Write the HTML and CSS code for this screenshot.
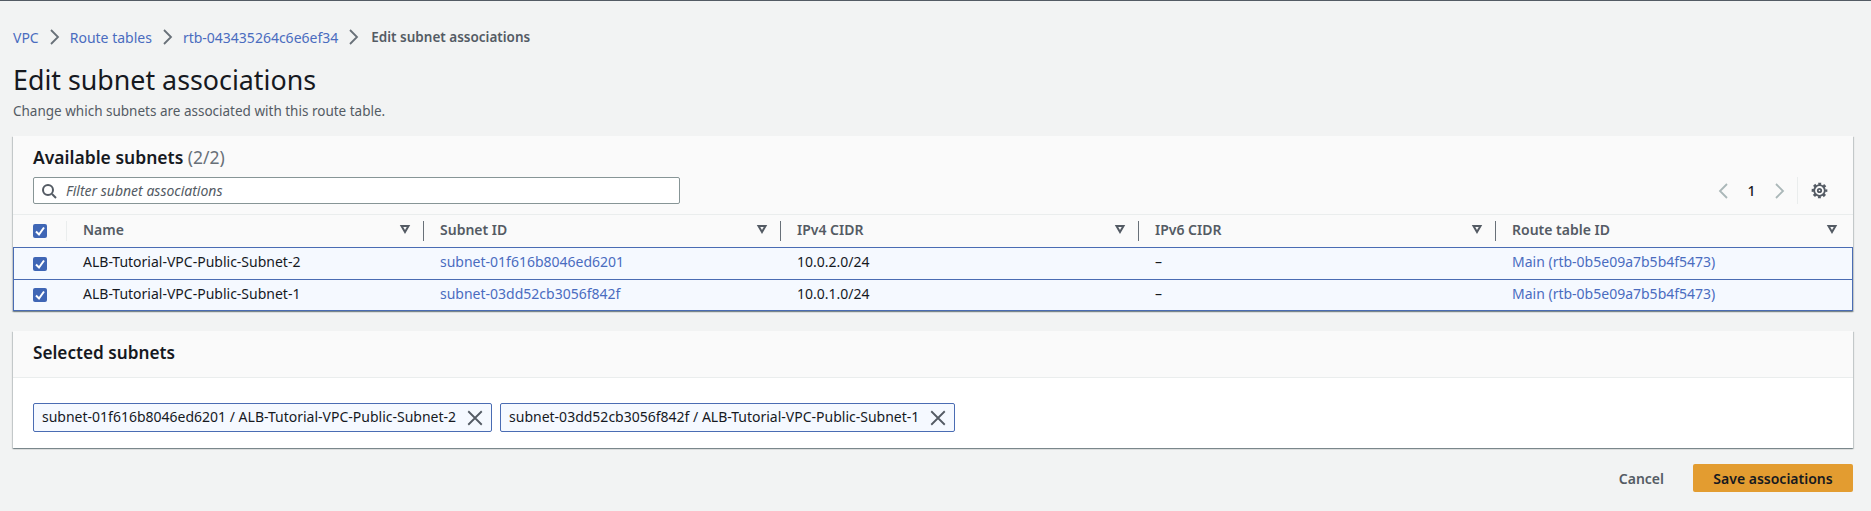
FILE: index.html
```html
<!DOCTYPE html>
<html lang="en">
<head>
    <meta charset="UTF-8">
    <title>Edit subnet associations</title>
    <link rel="stylesheet" href="styles.css">
</head>
<body>
    <nav class="breadcrumbs">
        <a href="#">VPC</a>
        <svg class="crumb-arrow" viewBox="0 0 16 16"><path d="M4 1l7 7-7 7"/></svg>
        <a href="#">Route tables</a>
        <svg class="crumb-arrow" viewBox="0 0 16 16"><path d="M4 1l7 7-7 7"/></svg>
        <a href="#">rtb-043435264c6e6ef34</a>
        <svg class="crumb-arrow crumb-arrow-last" viewBox="0 0 16 16"><path d="M4 1l7 7-7 7"/></svg>
        <span class="crumb-current">Edit subnet associations</span>
    </nav>

    <h1 class="page-title">Edit subnet associations</h1>
    <p class="page-desc">Change which subnets are associated with this route table.</p>

    <section class="card">
        <div class="card-head">
            <h2 class="card-title">Available subnets <span class="count">(2/2)</span></h2>
            <div class="tools">
                <div class="filter">
                    <svg class="search-icon" viewBox="0 0 16 16"><circle cx="7" cy="7" r="5"/><path d="M11 11l4 4"/></svg>
                    <span>Filter subnet associations</span>
                </div>
                <div class="pager">
                    <svg class="page-arrow" viewBox="0 0 16 16"><path d="M12 1L5 8l7 7"/></svg>
                    <span class="page-num">1</span>
                    <svg class="page-arrow" viewBox="0 0 16 16"><path d="M4 1l7 7-7 7"/></svg>
                    <span class="pager-gear">
                        <svg class="gear" viewBox="0 0 16 16">
                            <circle cx="8" cy="8" r="5"/>
                            <circle cx="8" cy="8" r="1.6"/>
                            <circle class="gear-teeth" cx="8" cy="8" r="6.2"/>
                        </svg>
                    </span>
                </div>
            </div>
        </div>

        <div class="table-row table-header">
            <div class="cell cell-check"><span class="checkbox"><svg viewBox="0 0 14 14"><path d="M3 7.5l3 3 5-7"/></svg></span></div>
            <div class="cell"><span>Name</span><svg class="sort" viewBox="0 0 12 12"><path d="M2.5 3h7L6 9z"/></svg></div>
            <div class="cell"><span>Subnet ID</span><svg class="sort" viewBox="0 0 12 12"><path d="M2.5 3h7L6 9z"/></svg></div>
            <div class="cell"><span>IPv4 CIDR</span><svg class="sort" viewBox="0 0 12 12"><path d="M2.5 3h7L6 9z"/></svg></div>
            <div class="cell"><span>IPv6 CIDR</span><svg class="sort" viewBox="0 0 12 12"><path d="M2.5 3h7L6 9z"/></svg></div>
            <div class="cell cell-last"><span>Route table ID</span><svg class="sort" viewBox="0 0 12 12"><path d="M2.5 3h7L6 9z"/></svg></div>
        </div>

        <div class="table-row data-row">
            <div class="cell cell-check"><span class="checkbox"><svg viewBox="0 0 14 14"><path d="M3 7.5l3 3 5-7"/></svg></span></div>
            <div class="cell">ALB-Tutorial-VPC-Public-Subnet-2</div>
            <div class="cell"><a href="#">subnet-01f616b8046ed6201</a></div>
            <div class="cell">10.0.2.0/24</div>
            <div class="cell">–</div>
            <div class="cell"><a href="#">Main (rtb-0b5e09a7b5b4f5473)</a></div>
        </div>
        <div class="table-row data-row">
            <div class="cell cell-check"><span class="checkbox"><svg viewBox="0 0 14 14"><path d="M3 7.5l3 3 5-7"/></svg></span></div>
            <div class="cell">ALB-Tutorial-VPC-Public-Subnet-1</div>
            <div class="cell"><a href="#">subnet-03dd52cb3056f842f</a></div>
            <div class="cell">10.0.1.0/24</div>
            <div class="cell">–</div>
            <div class="cell"><a href="#">Main (rtb-0b5e09a7b5b4f5473)</a></div>
        </div>
    </section>

    <section class="card selected-card">
        <div class="selected-head">
            <h2 class="card-title">Selected subnets</h2>
        </div>
        <div class="chips">
            <div class="chip">
                <span>subnet-01f616b8046ed6201 / ALB-Tutorial-VPC-Public-Subnet-2</span>
                <svg class="chip-x" viewBox="0 0 16 16"><path d="M2 2l12 12M14 2L2 14"/></svg>
            </div>
            <div class="chip">
                <span>subnet-03dd52cb3056f842f / ALB-Tutorial-VPC-Public-Subnet-1</span>
                <svg class="chip-x" viewBox="0 0 16 16"><path d="M2 2l12 12M14 2L2 14"/></svg>
            </div>
        </div>
    </section>

    <div class="actions">
        <a class="cancel" href="#">Cancel</a>
        <button class="save">Save associations</button>
    </div>
</body>
</html>
```

FILE: styles.css
```css
body {
    margin: 0;
    padding: 0 18px 0 13px;
    height: 511px;
    box-sizing: border-box;
    overflow: hidden;
    background-color: #f2f3f3;
    border-top: 1px solid #545b64;
    font-family: "Noto Sans", sans-serif;
    font-size: 14px;
    color: #16191f;
}
a {
    color: #4a6cbf;
    text-decoration: none;
}
.breadcrumbs {
    display: flex;
    align-items: center;
    height: 20px;
    margin-top: 26px;
}
.crumb-arrow {
    width: 16px;
    height: 16px;
    margin: 0 7px 0 8px;
    fill: none;
    stroke: #687078;
    stroke-width: 1.8;
}
.crumb-arrow-last {
    margin-right: 9px;
}
.crumb-current {
    color: #545b64;
    font-size: 13.5px;
    font-weight: 600;
}
.page-title {
    margin: 15px 0 0;
    font-size: 26.8px;
    line-height: 36px;
    font-weight: 400;
}
.page-desc {
    margin: 4px 0 0;
    font-size: 13.5px;
    line-height: 18px;
    color: #545b64;
}
.card {
    margin-top: 16px;
    background-color: #fff;
    box-shadow: 0 1px 1px rgba(0, 28, 36, 0.3), 1px 1px 1px rgba(0, 28, 36, 0.15), -1px 1px 1px rgba(0, 28, 36, 0.15);
}
.card-head {
    height: 79px;
    box-sizing: border-box;
    padding: 10px 0 0 20px;
    background-color: #fafafa;
    border-bottom: 1px solid #eaeded;
}
.card-title {
    margin: 0;
    font-size: 17.5px;
    line-height: 22px;
    font-weight: 600;
}
.count {
    font-weight: 400;
    color: #687078;
}
.tools {
    display: flex;
    justify-content: space-between;
    margin-top: 9px;
}
.filter {
    display: flex;
    align-items: center;
    gap: 9px;
    width: 647px;
    height: 27px;
    box-sizing: border-box;
    padding-left: 7px;
    background-color: #fff;
    border: 1px solid #879596;
    border-radius: 2px;
    color: #545b64;
    font-style: italic;
}
.search-icon {
    width: 16px;
    height: 16px;
    fill: none;
    stroke: #545b64;
    stroke-width: 2;
}
.pager {
    display: flex;
    align-items: center;
    padding-right: 25px;
}
.page-arrow {
    width: 16px;
    height: 16px;
    fill: none;
    stroke: #aab7b8;
    stroke-width: 1.8;
}
.page-num {
    width: 41px;
    text-align: center;
    font-weight: 500;
}
.pager-gear {
    display: flex;
    align-items: center;
    height: 27px;
    margin-left: 9px;
    padding-left: 13px;
    border-left: 1px solid #eaeded;
}
.gear {
    width: 17px;
    height: 17px;
    fill: none;
    stroke: #545b64;
    stroke-width: 1.7;
}
.gear-teeth {
    stroke-width: 2.4;
    stroke-dasharray: 2.6 2.27;
    stroke-dashoffset: 1.3;
}
.table-row {
    display: grid;
    grid-template-columns: 54px 357px 357px 358px 357px 1fr;
}
.table-header {
    height: 32px;
    box-sizing: border-box;
    background-color: #fafafa;
    color: #545b64;
    font-weight: 600;
}
.table-header .cell {
    justify-content: space-between;
    padding-right: 13px;
    padding-bottom: 4px;
}
.table-header .cell-check {
    padding-bottom: 0;
}
.table-header .cell::after {
    content: '';
    position: absolute;
    right: 0;
    top: 6px;
    height: 20px;
    border-right: 1px solid #687078;
}
.table-header .cell-check::after {
    border-right-color: #eaeded;
}
.table-header .cell-last {
    padding-right: 15px;
}
.table-header .cell-last::after {
    display: none;
}
.cell {
    position: relative;
    display: flex;
    align-items: center;
    padding-left: 16px;
}
.cell-check {
    padding-left: 20px;
}
.sort {
    width: 12px;
    height: 12px;
    fill: none;
    stroke: #545b64;
    stroke-width: 2;
}
.data-row {
    grid-template-columns: 53px 357px 357px 358px 357px 1fr;
    height: 32px;
    box-sizing: border-box;
    background-color: #f5f9ff;
    border: 1px solid #4a6cb3;
    border-bottom-width: 0;
}
.data-row:last-child {
    border-bottom-width: 1px;
}
.data-row .cell {
    padding-bottom: 4px;
}
.data-row .cell-check {
    padding-left: 19px;
    padding-bottom: 0;
}
.checkbox {
    display: flex;
    width: 14px;
    height: 14px;
    background-color: #3f66b5;
    border-radius: 2px;
}
.checkbox svg {
    fill: none;
    stroke: #fff;
    stroke-width: 2;
}
.selected-card {
    margin-top: 20px;
}
.selected-head {
    height: 47px;
    box-sizing: border-box;
    padding: 11px 20px 0;
    background-color: #fafafa;
    border-bottom: 1px solid #eaeded;
}
.selected-head .card-title {
    font-size: 17.2px;
}
.chips {
    display: flex;
    gap: 8px;
    height: 70px;
    box-sizing: border-box;
    padding: 25px 20px 0;
}
.chip {
    display: flex;
    align-items: center;
    justify-content: space-between;
    height: 29px;
    box-sizing: border-box;
    padding: 0 7px 2px 8px;
    background-color: #f5f9ff;
    border: 1px solid #4a6cb3;
    border-radius: 2px;
}
.chip-x {
    width: 18px;
    height: 18px;
    margin: 2px 0 0 10px;
    fill: none;
    stroke: #545b64;
    stroke-width: 1.6;
}
.actions {
    display: flex;
    align-items: center;
    justify-content: flex-end;
    margin-top: 16px;
}
.cancel {
    color: #545b64;
    font-weight: 600;
    margin-right: 29px;
}
.save {
    width: 160px;
    height: 28px;
    padding: 0;
    background-color: #e39c30;
    border: 0;
    border-radius: 2px;
    font-family: "Noto Sans", sans-serif;
    font-size: 14px;
    font-weight: 600;
    color: #16191f;
}
```
